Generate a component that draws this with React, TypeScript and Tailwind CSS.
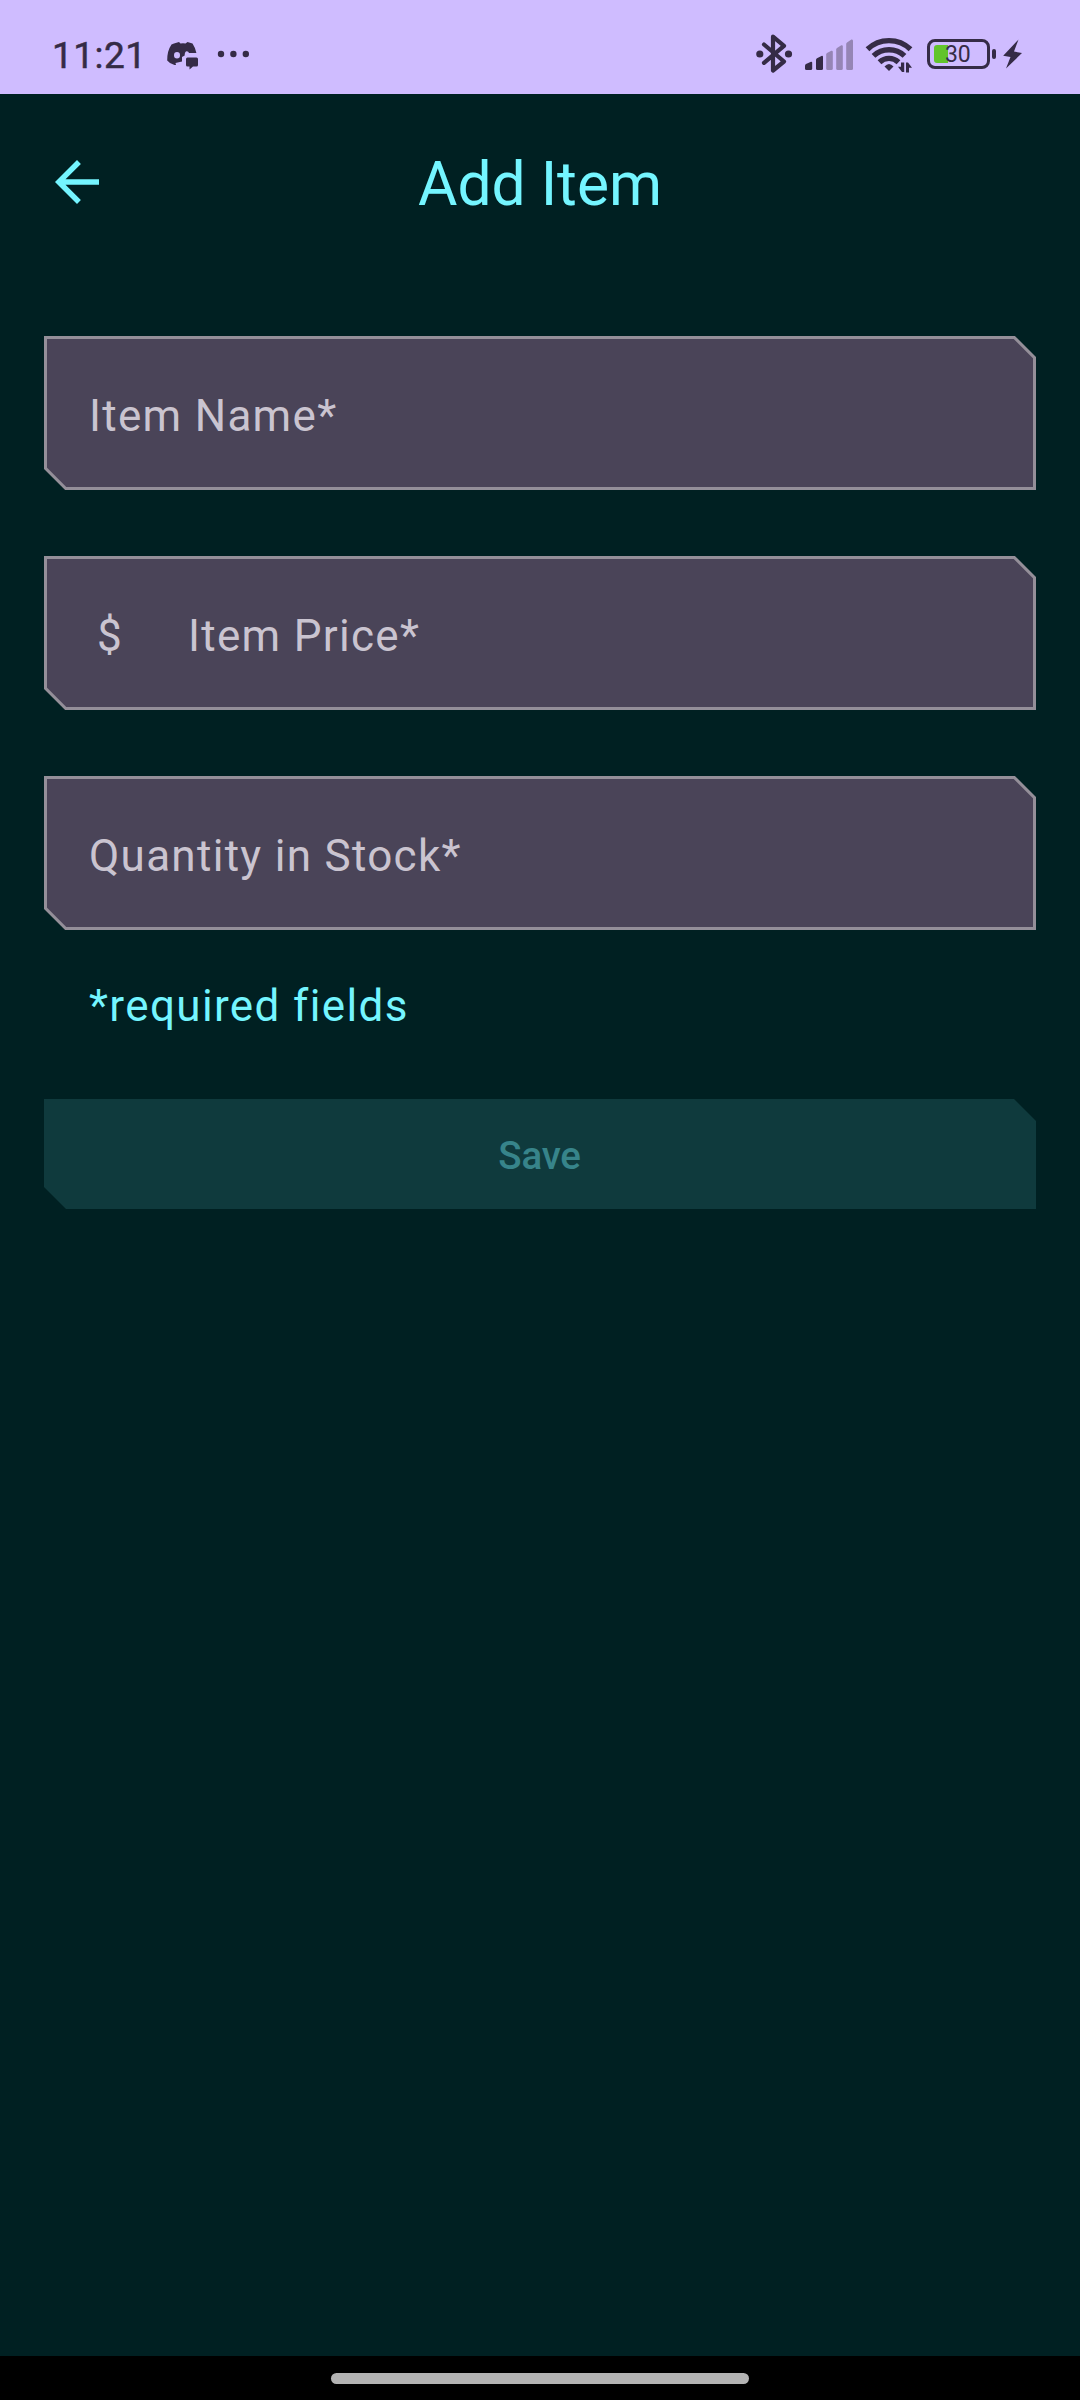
import React from "react";

const ink = "#352b46";

function StatusBar() {
  return (
    <header className="relative flex h-[94px] shrink-0 items-start bg-[#cfbcff] text-[#352b46]">
      <span className="ml-[52px] mt-[33px] w-[115px] whitespace-nowrap text-[37px] font-normal leading-[45px] tracking-[0.500px] [-webkit-text-stroke:0.5px_#352b46]">11:21</span>
      <svg className="mt-[40px] h-[30px] w-[32px]" viewBox="167 40 32 30" fill={ink}>
        <path
          fillRule="evenodd"
          d="M174 43.5 L179 42 L180.5 43.6 Q183 43.1 185.5 43.6 L187.5 42 L192.5 43.5 Q195.5 48 196.4 53 L189 53 Q188.5 51 186.5 51.2 Q184.500 52 184.700 55.500 L182 57 V61.500 L175.500 63 L176 65 L174.500 65 Q170 64 167.200 60.500 Q167 51 171.500 44.500Z M177 52 A3 3.300 0 1 0 177 58.600 A3 3.300 0 1 0 177 52Z"
        />
        <path d="M187.500 57.500 h9 q1.500 0 1.500 1.500 v6 q0 1.500 -1.500 1.500 h-3.500 l-3.500 3 v-3 h-2 q-1.500 0 -1.500 -1.500 v-6 q0 -1.500 1.500 -1.500z" />
      </svg>
      <svg className="ml-[18px] mt-[50px] h-[8px] w-[34px]" viewBox="217 50 34 8" fill={ink}>
        <circle cx="221" cy="54" r="3.200" />
        <circle cx="233.400" cy="54" r="3.200" />
        <circle cx="245.800" cy="54" r="3.200" />
      </svg>
      <svg className="ml-auto mt-[32px] h-[44px] w-[40px]" viewBox="754 32 40 44" fill="none" stroke={ink} strokeWidth="4.200" strokeLinejoin="round" strokeLinecap="round">
        <path d="M764 44.500 L784 61.500 L773 70.500 V36.700 L784 45.800 L764 62.800" />
        <circle cx="759.800" cy="54" r="3.600" fill={ink} stroke="none" />
        <circle cx="788.500" cy="54" r="3.600" fill={ink} stroke="none" />
      </svg>
      <svg className="ml-[10px] mt-[38px] h-[34px] w-[50px]" viewBox="804 38 50 34" fill={ink}>
        <path d="M805 65.500 Q805 64.500 806 64 L811 61.700 Q812.200 61.500 812.200 62.800 V68.500 Q812.200 70 810.700 70 H806.500 Q805 70 805 68.500Z" />
        <path d="M816 60 Q816 59 817 58.300 L821.500 55.900 Q823 55.500 823 57 V68.500 Q823 70 821.500 70 H817.500 Q816 70 816 68.500Z" />
        <g fill="#9585b5">
          <path d="M826.200 54.500 Q826.200 53.500 827 53 L831.300 50.800 Q832.800 50.400 832.800 52 V68.500 Q832.800 70 831.300 70 H827.700 Q826.200 70 826.200 68.500Z" />
          <path d="M836.200 49.500 Q836.200 48.500 837 47.900 L841.300 45.300 Q842.800 44.900 842.800 46.500 V68.500 Q842.800 70 841.300 70 H837.700 Q836.200 70 836.200 68.500Z" />
          <path d="M846.200 44 Q846.200 43 847 42.400 L851.400 39.600 Q853 39 853 41 V68.500 Q853 70 851.500 70 H847.700 Q846.200 70 846.200 68.500Z" />
        </g>
      </svg>
      <svg className="ml-[10px] mt-[36px] h-[38px] w-[52px]" viewBox="864 36 52 38" fill="none" stroke={ink} strokeWidth="5.400">
        <path d="M867.500 49.300 A31 31 0 0 1 910.500 49.300" />
        <path d="M873.500 55.900 A22.500 22.500 0 0 1 904.500 55.900" />
        <path d="M879.500 62.200 A13.800 13.800 0 0 1 898.500 62.200" />
        <path d="M884.500 66.500 Q889 61.500 893.500 66.500 L889 71Z" fill={ink} stroke="none" />
        <path d="M904.200 62.500 V72 H902 L898 66.800 H901 V62.500Z M906 72.500 V62.500 H908 L912 67.700 H909 V72.500Z" fill={ink} stroke="none" />
      </svg>
      <div className="relative ml-[11px] mt-[39px] h-[30px] w-[63px] rounded-[8px] border-[3px] border-[#352b46]">
        <div className="absolute left-[3.500px] top-[3px] h-[18px] w-[14.500px] rounded-l-[3px] bg-[#62c42c]" />
        <span className="absolute left-[15px] top-0 text-[23px] leading-[25px] tracking-[-0.3px]">30</span>
      </div>
      <div className="ml-[2px] mt-[49px] h-[10px] w-[4px] rounded-[2px] bg-[#352b46]" />
      <svg className="ml-[7px] mr-[57px] mt-[39px] h-[30px] w-[20px]" viewBox="1003 39 20 30" fill={ink}>
        <path d="M1018.500 39.500 L1003.200 55.800 L1010.500 57 L1006 68.500 L1022 53 L1014 51.500Z" />
      </svg>
    </header>
  );
}

function Field({ label, prefix }: { label: string; prefix?: string }) {
  return (
    <label className="relative flex h-[154px] items-center pl-[45px] pt-[6px]">
      <svg className="absolute inset-0" width="992" height="154" viewBox="0 0 992 154" fill="#4a4458" stroke="#948f99" strokeWidth="3">
        <path d="M1.500 1.500 H970.300 L990.500 21.700 V152.500 H21.700 L1.500 132.300Z" />
      </svg>
      {prefix && (
        <span className="relative w-[99px] pl-[8px] text-[44px] leading-[66px] text-[#cac4d0]">{prefix}</span>
      )}
      <span className="relative text-[44px] leading-[66px] tracking-[1.300px] text-[#cac4d0]">{label}</span>
    </label>
  );
}

export default function App() {
  return (
    <div className="flex h-[2400px] w-[1080px] flex-col overflow-hidden bg-[#002022] font-['Roboto',sans-serif]">
      <StatusBar />
      <div className="grid h-[176px] shrink-0 grid-cols-[66px_1fr_66px] items-center px-[44px]">
        <svg width="66" height="66" viewBox="0 0 24 24" fill="#74f5ff">
          <path d="M20 11H7.830l5.590-5.590L12 4l-8 8 8 8 1.410-1.410L7.830 13H20v-2z" />
        </svg>
        <h1 className="pt-[4px] text-center text-[60.500px] leading-[77px] text-[#74f5ff]">Add Item</h1>
      </div>
      <main className="flex flex-1 flex-col px-[44px] pt-[66px]">
        <div className="flex flex-col gap-[66px]">
          <Field label="Item Name*" />
          <Field label="Item Price*" prefix="$" />
          <Field label="Quantity in Stock*" />
        </div>
        <p className="ml-[45px] mt-[43px] text-[44px] leading-[66px] tracking-[1.375px] text-[#74f5ff]">*required fields</p>
        <button className="mt-[60px] h-[110px] bg-[#0f3a3d] pr-[1px] pt-[3px] text-[38.500px] font-medium tracking-[-0.200px] text-[#37848a] [clip-path:polygon(0_0,calc(100%-22px)_0,100%_22px,100%_100%,22px_100%,0_calc(100%-22px))]">
          Save
        </button>
      </main>
      <footer className="flex h-[44px] shrink-0 justify-center bg-black pt-[17px]">
        <div className="h-[11px] w-[418px] rounded-full bg-[#b3b3b3]" />
      </footer>
    </div>
  );
}
